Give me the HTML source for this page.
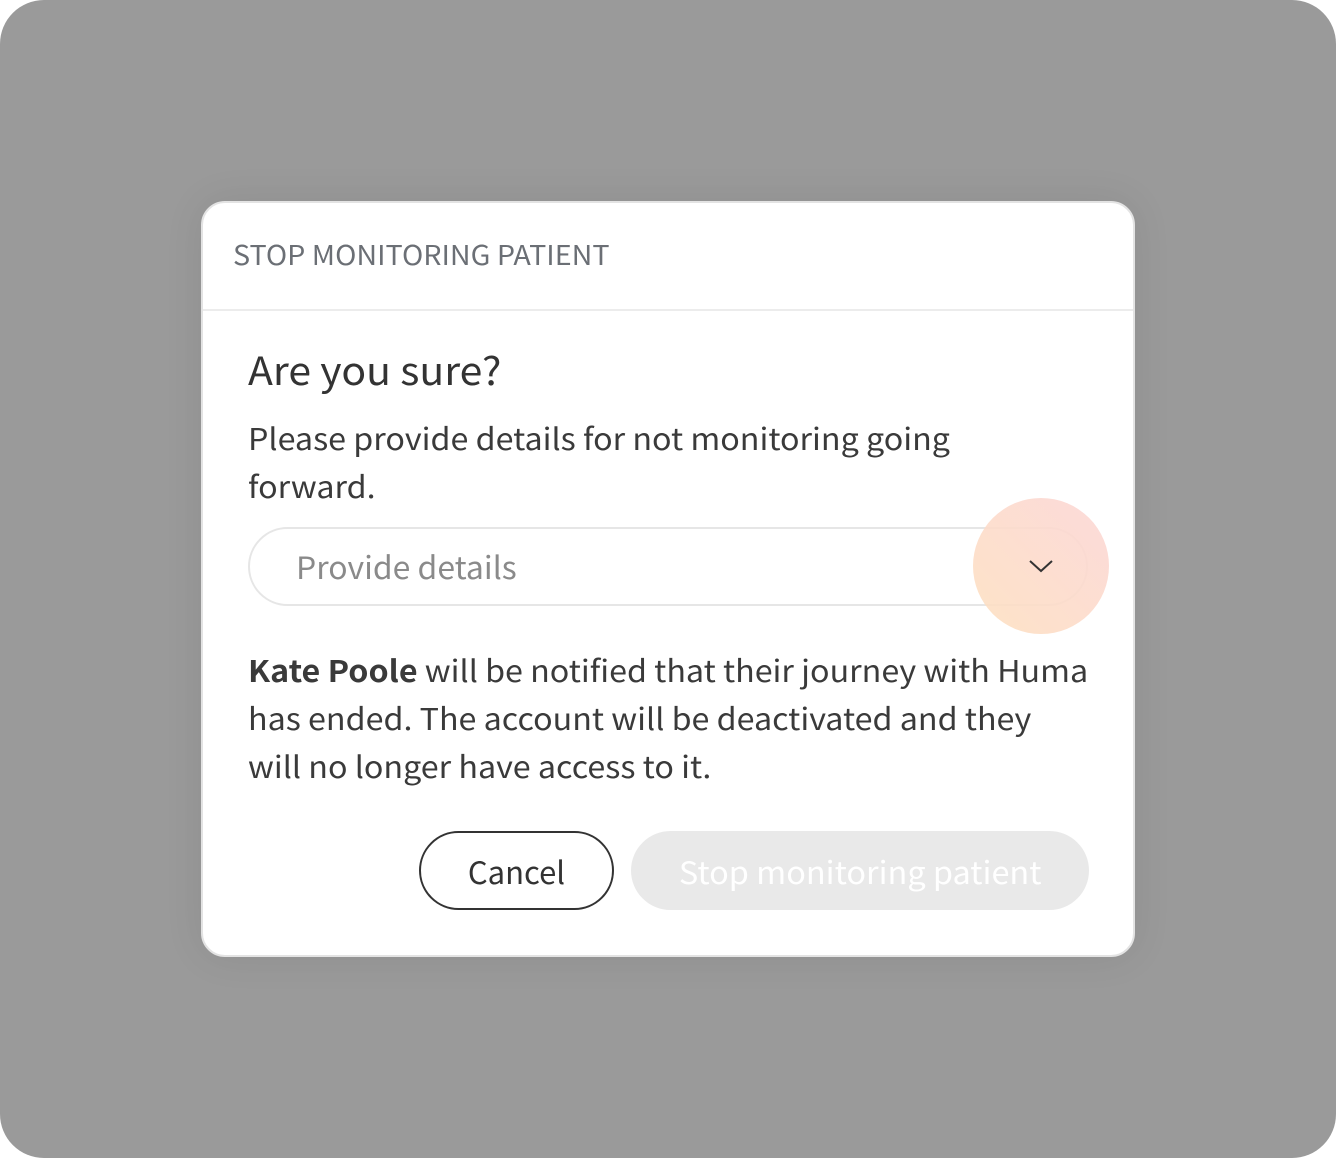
<!DOCTYPE html>
<html><head><meta charset="utf-8"><style>
html,body{margin:0;padding:0;background:#fff;}
body{width:1336px;height:1158px;position:relative;overflow:hidden;font-family:"Noto Sans CJK JP","Liberation Sans",sans-serif;color:#333;}
.bg{position:absolute;left:0;top:0;width:1336px;height:1158px;background:#9a9a9a;border-radius:44px;}
.dlg{position:absolute;left:201px;top:201px;width:930px;height:752px;background:#fff;border:2px solid #e3e3e3;border-radius:24px;box-shadow:0 0 40px rgba(0,0,0,0.08);}
.t{position:absolute;white-space:nowrap;line-height:1;transform-origin:0 0;}
.hd{left:30px;top:37px;font-size:27px;color:#6b6f75;transform:scaleX(1.063);}
.div{position:absolute;left:0;top:106px;width:930px;height:2px;background:#ececec;}
.h{left:45px;top:147px;font-size:39px;color:#333;transform:scaleX(1.05);}
.p{font-size:30px;color:#3a3a3a;transform:scaleX(1.075);}
.dd{position:absolute;left:45px;top:324px;width:836px;height:75px;border:2px solid #e6e6e6;border-radius:40px;}
.circ{position:absolute;left:770px;top:295px;width:136px;height:136px;border-radius:50%;background:linear-gradient(225deg,#fcd6d6,#fde0c0);opacity:0.9;}
.cancel{position:absolute;left:216px;top:628px;width:191px;height:75px;border:2px solid #333;border-radius:40px;font-size:31px;text-align:center;line-height:75px;color:#333;}
.stop{position:absolute;left:428px;top:628px;width:458px;height:79px;background:#e9e9e9;border-radius:40px;text-align:center;line-height:79px;color:#fff;}
.stop span{display:inline-block;font-size:31px;transform:scaleX(1.047);}
</style></head><body>
<div class="bg"></div>
<div class="dlg">
<div class="t hd">STOP MONITORING PATIENT</div>
<div class="div"></div>
<div class="t h">Are you sure?</div>
<div class="t p" style="left:45px;top:219px">Please provide details for not monitoring going</div>
<div class="t p" style="left:45px;top:267px">forward.</div>
<div class="dd"></div>
<div class="circ"></div>
<div class="t p" style="left:93px;top:347px;color:#8a8a8a;font-size:31px;transform:scaleX(1.03)">Provide details</div>
<svg style="position:absolute;left:825px;top:355px" width="26" height="16" viewBox="0 0 26 16"><path d="M2 3 L13 13 L24 3" fill="none" stroke="#333" stroke-width="2"/></svg>
<div class="t p" style="left:45px;top:451px"><b>Kate Poole</b> will be notified that their journey with Huma</div>
<div class="t p" style="left:45px;top:499px">has ended. The account will be deactivated and they</div>
<div class="t p" style="left:45px;top:547px">will no longer have access to it.</div>
<div class="cancel">Cancel</div>
<div class="stop"><span>Stop monitoring patient</span></div>
</div>
</body></html>
